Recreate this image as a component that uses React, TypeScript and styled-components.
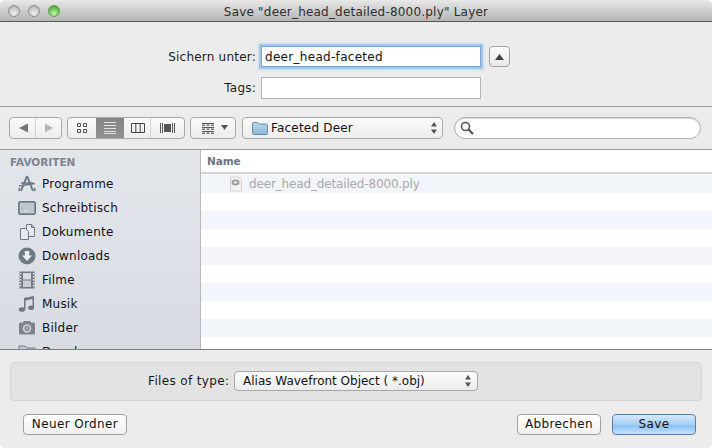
import React from "react";
import styled, { createGlobalStyle } from "styled-components";

const Global = createGlobalStyle`
  html, body { margin: 0; padding: 0; background: #fff; }
  * { box-sizing: border-box; }
`;

const Win = styled.div`
  width: 712px; height: 448px; display: flex; flex-direction: column; overflow: hidden;
  border-radius: 5px; background: #ececec; color: #111;
  font-family: "DejaVu Sans", "Noto Sans", sans-serif; font-size: 12px;
`;
const TitleBar = styled.div`
  height: 22px; flex: none; display: flex; align-items: center; position: relative; padding-left: 8px; gap: 8px;
  background: linear-gradient(#e9e9e9, #b4b4b4); border-bottom: 1px solid #585858;
`;
const Light = styled.span<{ $c?: boolean }>`
  width: 12px; height: 12px; border-radius: 50%; border: 1px solid ${p => (p.$c ? "#5e9a50" : "#8e8e8e")};
  background: ${p => p.$c
    ? "radial-gradient(circle at 50% 75%, #c8f5a8, #66c050 60%, #3d8a35)"
    : "radial-gradient(circle at 50% 75%, #f2f2f2, #c8c8c8 60%, #9d9d9d)"};
`;
const Title = styled.div`
  position: absolute; left: 0; right: 0; top: 4px; text-align: center; color: #2e2e2e; line-height: 16px; letter-spacing: 0.2px;
`;
const Form = styled.div`
  height: 85px; flex: none; display: grid; grid-template-columns: 256px 220px 20px; column-gap: 5px; row-gap: 8px;
  align-content: start; align-items: start; padding-top: 24px;
  border-bottom: 1px solid #9c9c9c; background: #ececec;
`;
const Label = styled.label`text-align: right; line-height: 23px; letter-spacing: 0.22px; color: #1a1a1a;`;
const Field = styled.div<{ $focus?: boolean }>`
  height: ${p => (p.$focus ? 21 : 22)}px; background: #fff; padding-left: 3px; line-height: 21px; font-size: 12px; letter-spacing: 0.3px;
  border: 1px solid ${p => (p.$focus ? "#7aa6cf" : "#b4b4b4")};
  ${p => p.$focus && "box-shadow: 0 0 0 2px #a5c8e6, 0 0 2px 3px #c6dcee;"}
`;
const Disclosure = styled.div`
  width: 21px; height: 21px; margin-left: 3px; border: 1px solid #a2a2a2; border-radius: 4px;
  background: linear-gradient(#fbfbfb, #e9e9e9); display: flex; align-items: center; justify-content: center;
`;
const Toolbar = styled.div`
  height: 43px; flex: none; display: flex; align-items: center; padding: 0 11px 1px 9px;
  border-bottom: 1px solid #9c9c9c; background: #ececec;
`;
const Seg = styled.div<{ $w: number; $ml: number }>`
  width: ${p => p.$w}px; margin-left: ${p => p.$ml}px; height: 22px; display: flex; flex: none; overflow: hidden;
  border: 1px solid #a8a8a8; border-radius: 4px; background: linear-gradient(#fafafa, #ededed);
`;
const SegItem = styled.div<{ $w: number; $on?: boolean; $sep?: boolean }>`
  width: ${p => p.$w}px; flex: none; display: flex; align-items: center; justify-content: center;
  background: ${p => (p.$on ? "linear-gradient(#858585, #929292)" : "transparent")};
  ${p => p.$sep && "box-shadow: inset -1px 0 0 0 #d4d4d4;"}
`;
const ArrangeInner = styled.div`display: flex; align-items: center; padding-left: 11px; gap: 7px;`;
const PathName = styled.span`margin-left: 3px; flex: 1; line-height: 20px; letter-spacing: 0.2px;`;
const PopupBox = styled.div`
  margin-left: 6px; width: 201px; height: 22px; flex: none; display: flex; align-items: center; padding: 0 5px 0 9px;
  border: 1px solid #a8a8a8; border-radius: 4px; background: linear-gradient(#fafafa, #ededed);
`;
const Search = styled.div`
  margin-left: 11px; width: 247px; height: 22px; flex: none; border: 1px solid #b0b0b0; border-radius: 11px;
  background: #fff; box-shadow: inset 0 1px 1px #d5d5d5; display: flex; align-items: center; padding-left: 5px;
`;
const Main = styled.div`height: 200px; flex: none; display: flex; background: #fff; border-bottom: 1px solid #7f7f7f;`;
const Sidebar = styled.div`
  width: 201px; flex: none; overflow: hidden; border-right: 1px solid #b9b9b9;
  background: linear-gradient(#e3e7ec, #d8dce2); padding-top: 5px;
`;
const SideHead = styled.div`
  padding-left: 10px; font-size: 10.5px; font-weight: 700; color: #7b8490; line-height: 14px; height: 17px;
`;
const SideItem = styled.div`
  height: 24px; display: flex; align-items: center; padding-left: 18px; gap: 6px; line-height: 24px; flex: none; letter-spacing: 0.22px;
`;
const IconSlot = styled.span`width: 18px; height: 18px; flex: none; display: block;`;
const List = styled.div`flex: 1; min-width: 0; overflow: hidden;`;
const ListHead = styled.div`
  height: 24px; margin-bottom: 1px; padding-left: 6px; font-size: 10.5px; font-weight: 700; color: #6c7480; line-height: 22px;
  letter-spacing: -0.1px; border-bottom: 2px solid #d2d2d2; background: #fff;
`;
const Row = styled.div<{ $odd: boolean }>`
  height: 18px; display: flex; align-items: center; padding-left: 27px; gap: 5px; color: #a9a9a9; letter-spacing: -0.15px;
  background: ${p => (p.$odd ? "#f2f5f9" : "#fff")};
`;
const Bottom = styled.div`flex: 1; display: flex; flex-direction: column; padding: 12px 10px 0; background: #ececec;`;
const Accessory = styled.div`
  height: 39px; flex: none; display: flex; align-items: center; padding: 0 0 1px 137px; gap: 6px;
  border: 1px solid #d6d6d6; border-radius: 4px; background: #e3e3e3;
`;
const TypeLabel = styled.span`width: 80px; text-align: right; white-space: nowrap; letter-spacing: 0.35px; color: #1a1a1a;`;
const TypePopup = styled.div`
  width: 244px; height: 20px; border: 1px solid #a8a8a8; border-radius: 4px; padding: 0 6px 0 8px;
  background: linear-gradient(#fdfdfd, #ececec); display: flex; align-items: center; justify-content: space-between; flex: none;
`;
const Actions = styled.div`display: flex; align-items: center; padding: 13px 6px 0 13px;`;
const Btn = styled.button<{ $w: number; $primary?: boolean; $ml?: number | string }>`
  all: unset; box-sizing: border-box; width: ${p => p.$w}px; height: 21px; text-align: center; line-height: 19px;
  font-family: inherit; font-size: 12px; color: #111; border-radius: 4px; flex: none; letter-spacing: 0.38px;
  margin-left: ${p => (p.$ml === undefined ? "0" : typeof p.$ml === "number" ? `${p.$ml}px` : p.$ml)};
  border: 1px solid ${p => (p.$primary ? "#5f7ea6" : "#a0a0a0")};
  background: ${p => p.$primary ? "linear-gradient(#d7e9fa, #a6d0f5 50%, #8cc2f3 55%, #c2e2fb)" : "linear-gradient(#fff, #f0f0f0)"};
`;

const G = "#6f7985";
const Svg = styled.svg`display: block; flex: none;`;
const ArrowL = ({ c }: { c: string }) => <Svg width="9" height="10" viewBox="0 0 9 10"><path d="M0 5 9 .5v9z" fill={c} /></Svg>;
const ArrowR = ({ c }: { c: string }) => <Svg width="8" height="10" viewBox="0 0 8 10"><path d="M8 5 0 .5v9z" fill={c} /></Svg>;
const Updown = () => (
  <Svg width="6" height="12" viewBox="0 0 6 12"><path d="M3 0 6 4.5H0zM3 12 0 7.5h6z" fill="#555" /></Svg>
);
const Grid4 = () => (
  <Svg width="12" height="12" viewBox="0 0 12 12" fill="none" stroke="#555"><path d="M1.5 1.5h3v3h-3zM7.5 1.5h3v3h-3zM1.5 7.5h3v3h-3zM7.5 7.5h3v3h-3z" /></Svg>
);
const Lines = () => (
  <Svg width="12" height="12" viewBox="0 0 12 12" stroke="#e2e2e2"><path d="M0 .5h12M0 3.5h12M0 6.5h12M0 9.5h12M0 11.5h12" /></Svg>
);
const Cols = () => (
  <Svg width="14" height="12" viewBox="0 0 14 12" fill="none" stroke="#444"><path d="M.5 1.5h13v9H.5zM4.8 1.5v9M9.2 1.5v9" /></Svg>
);
const Cover = () => (
  <Svg width="15" height="12" viewBox="0 0 15 12"><path d="M.5 1v10M2.5 1v10M12.5 1v10M14.5 1v10" stroke="#555" fill="none" /><rect x="4" y="2" width="7" height="8" fill="#555" /></Svg>
);
const Arrange = () => (
  <Svg width="12" height="12" viewBox="0 0 12 12"><path d="M0 1h12v1H0zM0 5h12v1H0zM0 9h12v1H0z" fill="#555" /><path d="M0 2.5h3v1.5H0zM4.5 2.5h3v1.5h-3zM9 2.5h3v1.5H9zM0 10.5h3V12H0zM4.5 10.5h3V12h-3zM9 10.5h3V12H9zM0 6.5h3V8H0zM4.5 6.5h3V8h-3zM9 6.5h3V8H9z" fill="#777" /></Svg>
);
const Caret = () => <Svg width="7" height="5" viewBox="0 0 7 5"><path d="M0 0h7L3.5 5z" fill="#555" /></Svg>;
const FolderBlue = () => (
  <Svg width="16" height="14" viewBox="0 0 16 14">
    <defs><linearGradient id="fb" x1="0" y1="0" x2="0" y2="1"><stop offset="0" stopColor="#bcd7ea" /><stop offset="1" stopColor="#8ab5d4" /></linearGradient></defs>
    <path d="M.5 2.5A1 1 0 0 1 1.5 1.5h4l1.5 1.5h7.5a1 1 0 0 1 1 1v8.5a1 1 0 0 1-1 1h-13a1 1 0 0 1-1-1z" fill="url(#fb)" stroke="#6b8fab" />
  </Svg>
);
const Mag = () => (
  <Svg width="14" height="14" viewBox="0 0 14 14" fill="none"><circle cx="5.5" cy="5.5" r="4" stroke="#555" strokeWidth="1.6" /><path d="M8.5 8.5 13 13" stroke="#555" strokeWidth="2.2" /></Svg>
);
const Apps = () => (
  <Svg width="18" height="18" viewBox="0 0 18 18" fill="none" stroke={G}>
    <path d="M9 1 3 16M9 1l6 15" strokeWidth="2" /><path d="M1 11 17 8.5M3 8h12" strokeWidth="1.6" /><path d="M1.5 13 1 16M16.5 13l.5 3" strokeWidth="1.6" />
  </Svg>
);
const Desk = () => (
  <Svg width="18" height="18" viewBox="0 0 18 18">
    <rect x=".5" y="2.5" width="17" height="13" rx="1.5" fill="#8b949e" stroke="#6b747e" />
    <rect x="2" y="4" width="14" height="10" fill="#bfc5cc" /><path d="M6 12h6" stroke="#fff" strokeDasharray="1 1" />
  </Svg>
);
const Docs = () => (
  <Svg width="18" height="18" viewBox="0 0 18 18" fill="#e6e8eb" stroke={G}>
    <path d="M8.5 1.5h5l3 3v9h-8z" /><path d="M2.5 5.5h5l3 3v8h-8z" /><path d="M13.5 1.5v3h3" fill="none" />
  </Svg>
);
const Down = () => (
  <Svg width="18" height="18" viewBox="0 0 18 18"><circle cx="9" cy="9" r="8.5" fill={G} /><path d="M6.8 4h4.4v4.5H14L9 14 4 8.5h2.8z" fill="#eef0f2" /></Svg>
);
const Film = () => (
  <Svg width="18" height="18" viewBox="0 0 18 18">
    <rect x="1.5" y="0.5" width="15" height="17" fill="#6f7985" />
    <rect x="5" y="2" width="8" height="6.5" fill="#d8dce0" /><rect x="5" y="9.5" width="8" height="6.5" fill="#c9ced3" />
    <path d="M2.5 2v14M15.5 2v14" stroke="#e3e6ea" strokeWidth="1.4" strokeDasharray="1.5 1.5" />
  </Svg>
);
const Music = () => (
  <Svg width="18" height="18" viewBox="0 0 18 18" fill={G}>
    <path d="M6 3 16 1v11h-1.5V4L7.5 5.4V14H6z" /><ellipse cx="4" cy="14.5" rx="3.2" ry="2.3" /><ellipse cx="13.2" cy="12.7" rx="3" ry="2.2" />
  </Svg>
);
const Camera = () => (
  <Svg width="18" height="18" viewBox="0 0 18 18">
    <path d="M1 5a1.5 1.5 0 0 1 1.5-1.5H5L6 2h6l1 1.5h2.5A1.5 1.5 0 0 1 17 5v9a1.5 1.5 0 0 1-1.5 1.5h-13A1.5 1.5 0 0 1 1 14z" fill="#7a838e" />
    <circle cx="9" cy="9.5" r="4.3" fill="#c9ced4" /><circle cx="9" cy="9.5" r="2.5" fill="#7a838e" /><circle cx="9" cy="9.5" r="1.4" fill="#aab1b9" />
  </Svg>
);
const Folder = () => (
  <Svg width="18" height="18" viewBox="0 0 18 18"><path d="M1 3h6l2 2h8v11H1z" fill="#c5cad0" stroke={G} /></Svg>
);
const PlyFile = () => (
  <Svg width="16" height="16" viewBox="0 0 16 16">
    <path d="M2.5 1h8l3 3v11h-11z" fill="#f3f3f3" stroke="#d4d4d4" />
    <ellipse cx="7.5" cy="6.5" rx="4" ry="3" fill="#9c9c9c" /><ellipse cx="7.5" cy="6.5" rx="2" ry="1.3" fill="#e0e0e0" />
  </Svg>
);

const items: [string, React.ReactNode][] = [
  ["Programme", <Apps />], ["Schreibtisch", <Desk />], ["Dokumente", <Docs />], ["Downloads", <Down />],
  ["Filme", <Film />], ["Musik", <Music />], ["Bilder", <Camera />], ["Develop", <Folder />],
];

export default function App() {
  return (
    <Win>
      <Global />
      <TitleBar>
        <Light /><Light /><Light $c />
        <Title>Save "deer_head_detailed-8000.ply" Layer</Title>
      </TitleBar>
      <Form>
        <Label>Sichern unter:</Label>
        <Field $focus>deer_head-faceted</Field>
        <Disclosure><Svg width="9" height="6" viewBox="0 0 9 6"><path d="M0 6h9L4.5 0z" fill="#444" /></Svg></Disclosure>
        <Label>Tags:</Label>
        <Field />
      </Form>
      <Toolbar>
        <Seg $w={53} $ml={0}>
          <SegItem $w={26} $sep><ArrowL c="#777" /></SegItem>
          <SegItem $w={25}><ArrowR c="#b5b5b5" /></SegItem>
        </Seg>
        <Seg $w={118} $ml={5}>
          <SegItem $w={28}><Grid4 /></SegItem>
          <SegItem $w={28} $on><Lines /></SegItem>
          <SegItem $w={27} $sep><Cols /></SegItem>
          <SegItem $w={33}><Cover /></SegItem>
        </Seg>
        <Seg $w={46} $ml={5}>
          <ArrangeInner><Arrange /><Caret /></ArrangeInner>
        </Seg>
        <PopupBox>
          <FolderBlue />
          <PathName>Faceted Deer</PathName>
          <Updown />
        </PopupBox>
        <Search><Mag /></Search>
      </Toolbar>
      <Main>
        <Sidebar>
          <SideHead>FAVORITEN</SideHead>
          {items.map(([name, icon]) => (
            <SideItem key={name}><IconSlot>{icon}</IconSlot>{name}</SideItem>
          ))}
        </Sidebar>
        <List>
          <ListHead>Name</ListHead>
          {Array.from({ length: 10 }, (_, i) => (
            <Row key={i} $odd={i % 2 === 0}>
              {i === 0 && <><PlyFile />deer_head_detailed-8000.ply</>}
            </Row>
          ))}
        </List>
      </Main>
      <Bottom>
        <Accessory>
          <TypeLabel>Files of type:</TypeLabel>
          <TypePopup>Alias Wavefront Object ( *.obj)<Updown /></TypePopup>
        </Accessory>
        <Actions>
          <Btn $w={104}>Neuer Ordner</Btn>
          <Btn $w={84} $ml="auto">Abbrechen</Btn>
          <Btn $w={84} $ml={11} $primary>Save</Btn>
        </Actions>
      </Bottom>
    </Win>
  );
}
